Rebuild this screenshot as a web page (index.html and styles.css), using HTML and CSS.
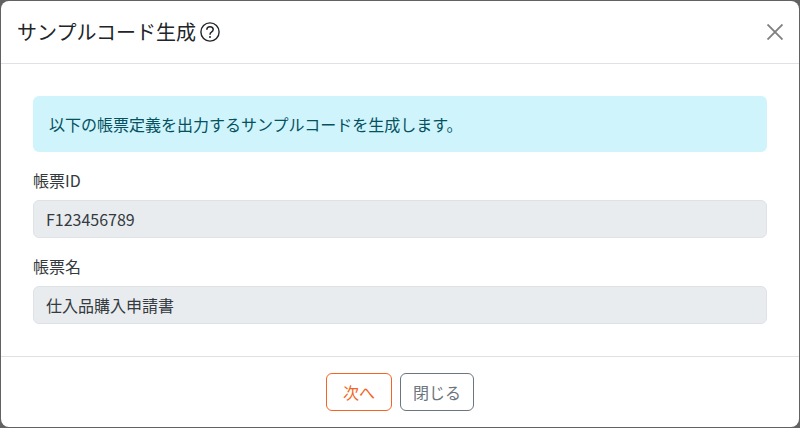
FILE: index.html
```html
<!DOCTYPE html>
<html lang="ja">
<head>
<meta charset="utf-8">
<title>サンプルコード生成</title>
<link rel="stylesheet" href="styles.css">
</head>
<body>
<div class="modal">
  <header class="modal-header">
    <h1 class="modal-title">サンプルコード生成</h1>
    <svg class="help-icon" viewBox="0 0 20 20" aria-hidden="true">
      <circle cx="10" cy="10" r="9.1" fill="none" stroke="#212529" stroke-width="1.4"/>
      <path d="M6.800 7.800C6.800 5.800 8.200 4.700 10 4.700s3.200 1.100 3.200 2.800c0 1.400-.8 2-1.800 2.700-1 .6-1.400 1.200-1.400 2.500" fill="none" stroke="#212529" stroke-width="1.5"/>
      <circle cx="10" cy="15" r="1" fill="#212529"/>
    </svg>
    <button class="close-btn" type="button" aria-label="閉じる">
      <svg viewBox="0 0 16 16" aria-hidden="true"><path d="M.5.5l15 15M15.500.5l-15 15" fill="none" stroke="#808080" stroke-width="1.9"/></svg>
    </button>
  </header>
  <main class="modal-body">
    <div class="alert">以下の帳票定義を出力するサンプルコードを生成します。</div>
    <div class="field">
      <label class="field-label">帳票ID</label>
      <div class="field-input">F123456789</div>
    </div>
    <div class="field">
      <label class="field-label">帳票名</label>
      <div class="field-input">仕入品購入申請書</div>
    </div>
  </main>
  <footer class="modal-footer">
    <button class="btn btn-next" type="button">次へ</button>
    <button class="btn btn-close" type="button">閉じる</button>
  </footer>
</div>
</body>
</html>
```
FILE: styles.css
```css
* { box-sizing: border-box; }
html, body { height: 100%; }
body {
  margin: 0;
  padding: 1px;
  background: #626262;
  font-family: "Noto Sans CJK JP", "Noto Sans", sans-serif;
  color: #212529;
}
.modal {
  height: 426px;
  background: #fff;
  border-radius: 8px;
  display: flex;
  flex-direction: column;
}
.modal-header {
  height: 63px;
  flex: none;
  display: flex;
  align-items: center;
  padding: 0 16px;
  border-bottom: 1px solid #dee2e6;
}
.modal-title {
  margin: 0;
  font-size: 20px;
  font-weight: 400;
  line-height: 30px;
  color: #212529;
}
.help-icon { width: 20px; height: 20px; margin-left: 4px; }
.close-btn {
  margin-left: auto;
  width: 18px;
  height: 18px;
  padding: 0;
  margin-right: -1px;
  border: 0;
  background: none;
  display: flex;
}
.close-btn svg { width: 16px; height: 16px; margin: 1px; }
.modal-body {
  flex: 1;
  padding: 32px;
}
.alert {
  height: 56px;
  padding: 0 16px;
  display: flex;
  align-items: center;
  background: #cff4fc;
  border-radius: 6px;
  color: #055160;
  font-size: 16px;
}
.field { margin-top: 16px; }
.field-label {
  display: block;
  font-size: 16px;
  line-height: 24px;
  margin-bottom: 8px;
  color: #343a40;
}
.field-input {
  height: 38px;
  padding: 0 12px;
  display: flex;
  align-items: center;
  background: #e9ecef;
  border: 1px solid #dee2e6;
  border-radius: 6px;
  font-size: 16px;
  color: #343a40;
}
.modal-footer {
  height: 71px;
  flex: none;
  border-top: 1px solid #dee2e6;
  display: flex;
  justify-content: center;
  align-items: flex-start;
  gap: 8px;
  padding-top: 16px;
}
.btn {
  height: 38px;
  padding: 0 12px;
  background: #fff;
  border-radius: 6px;
  font-family: inherit;
  font-size: 16px;
  border: 1px solid;
}
.btn-next { width: 66px; color: #f26522; border-color: #f26522; }
.btn-close { width: 74px; color: #6c757d; border-color: #6c757d; }
```
